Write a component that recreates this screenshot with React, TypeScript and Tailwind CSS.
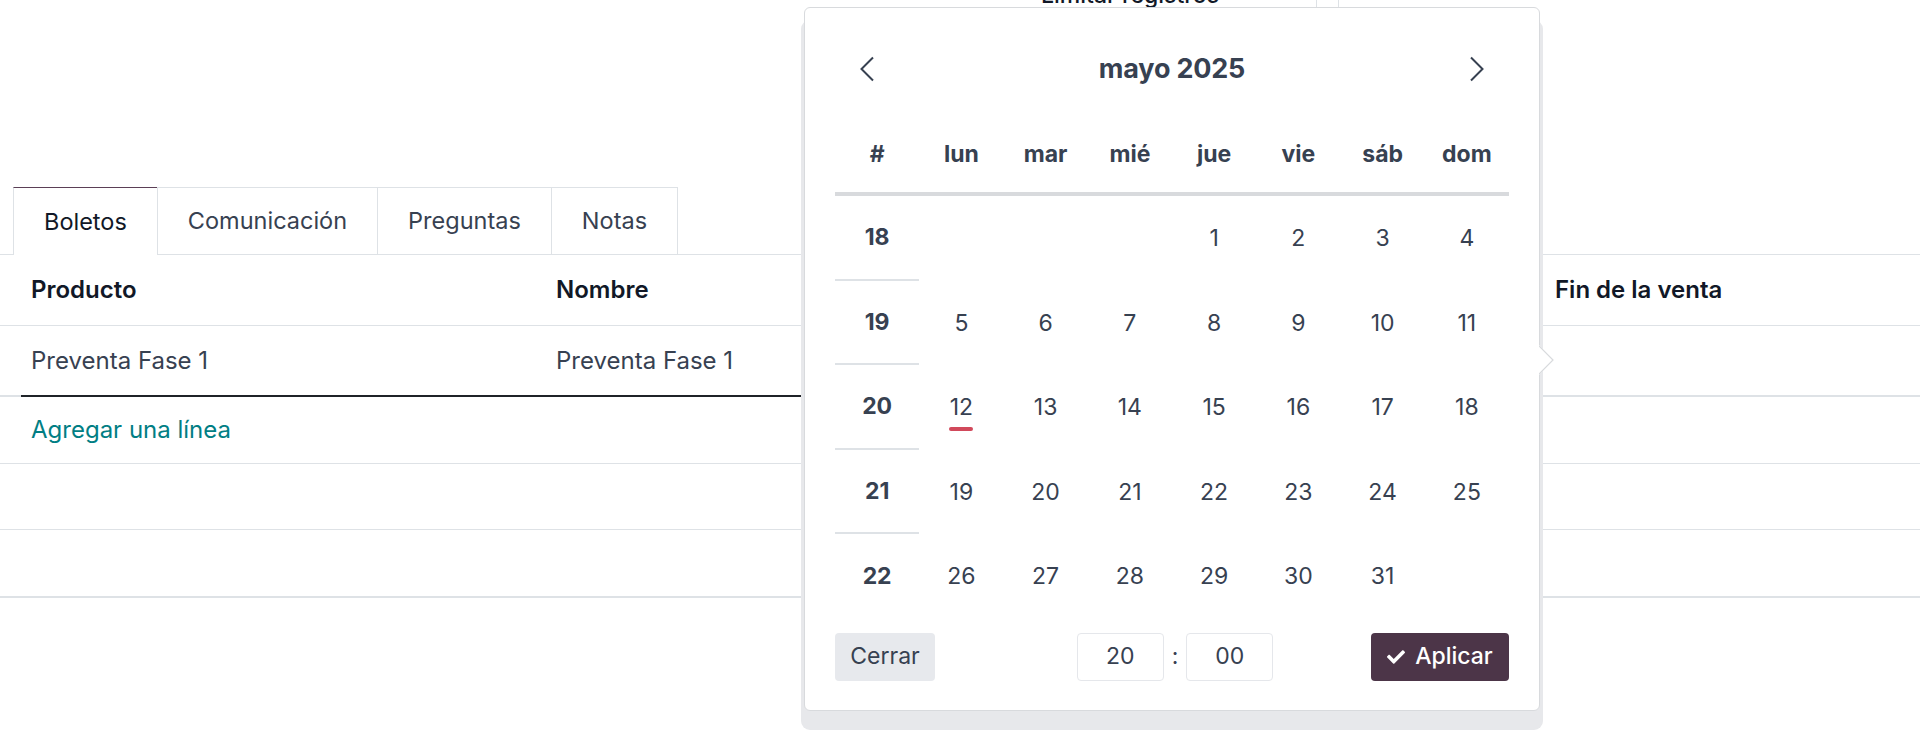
import { FaCheck } from "react-icons/fa";

const weeks: { num: number; days: (number | null)[] }[] = [
  { num: 18, days: [null, null, null, 1, 2, 3, 4] },
  { num: 19, days: [5, 6, 7, 8, 9, 10, 11] },
  { num: 20, days: [12, 13, 14, 15, 16, 17, 18] },
  { num: 21, days: [19, 20, 21, 22, 23, 24, 25] },
  { num: 22, days: [26, 27, 28, 29, 30, 31, null] },
];

const weekdays = ["#", "lun", "mar", "mié", "jue", "vie", "sáb", "dom"];

const tabs = ["Boletos", "Comunicación", "Preguntas", "Notas"];

const DatePicker = () => {
  return (
    <div className="absolute left-[804px] top-[7px] w-[736px] h-[704px] bg-white border border-[#d8dadd] rounded-[6px] shadow-[0_16px_0_3px_#e7e8eb] pt-[28px] px-[30px] text-[#374151]">
      {/* little arrow pointing at the field */}
      <svg
        className="absolute left-[734px] top-[337px]"
        width="15"
        height="30"
        viewBox="0 0 15 30"
      >
        <path d="M0 0 L14 15 L0 30 Z" fill="#ffffff" />
        <path d="M0 1 L14 15 L0 29" fill="none" stroke="#d8dadd" strokeWidth="1.2" />
      </svg>

      <div className="flex items-center justify-between h-[66px] px-[24px]">
        <svg width="16" height="26" viewBox="0 0 16 26">
          <path d="M14 1.5 L2.5 13 L14 24.5" fill="none" stroke="#374151" strokeWidth="2" />
        </svg>
        <span className="text-[27px] font-bold tracking-[-0.2px]">mayo 2025</span>
        <svg width="16" height="26" viewBox="0 0 16 26">
          <path d="M2 1.5 L13.5 13 L2 24.5" fill="none" stroke="#374151" strokeWidth="2" />
        </svg>
      </div>

      <div className="grid grid-cols-8 h-[94px] items-center pt-[14px] border-b-[4px] border-[#d8dadd]">
        {weekdays.map((d) => (
          <span key={d} className="text-center text-[23px] font-bold">
            {d}
          </span>
        ))}
      </div>

      <div className="flex flex-col">
        {weeks.map((w, i) => (
          <div key={w.num} className="grid grid-cols-8 h-[84.5px]">
            <div
              className={`flex items-center justify-center text-[23px] font-bold ${
                i < weeks.length - 1 ? "border-b-2 border-[#dee2e6]" : ""
              }`}
            >
              {w.num}
            </div>
            {w.days.map((d, j) => (
              <div key={j} className="relative flex items-center justify-center text-[23px]">
                {d}
                {d === 12 && (
                  <span className="absolute left-1/2 -translate-x-1/2 top-[62px] w-[24px] h-[4px] rounded-full bg-[#d1495b]" />
                )}
              </div>
            ))}
          </div>
        ))}
      </div>

      <div className="flex items-center justify-between mt-[14px]">
        <button className="h-[48px] w-[100px] rounded-[4px] bg-[#e7e9ed] text-[23px] text-[#374151]">
          Cerrar
        </button>
        <div className="flex items-center gap-[8px] ml-[44px]">
          <div className="h-[48px] w-[87px] rounded-[4px] border border-[#e5e7eb] flex items-center justify-center text-[23px]">
            20
          </div>
          <span className="text-[23px]">:</span>
          <div className="h-[48px] w-[87px] rounded-[4px] border border-[#e5e7eb] flex items-center justify-center text-[23px]">
            00
          </div>
        </div>
        <button className="h-[48px] w-[138px] rounded-[4px] bg-[#4c3548] text-white text-[23px] font-medium flex items-center justify-center gap-[10px]">
          <FaCheck size={18} />
          Aplicar
        </button>
      </div>
    </div>
  );
};

export default function App() {
  return (
    <div className="relative w-[1920px] h-[751px] overflow-hidden bg-white font-['Inter','Liberation_Sans',sans-serif]">
      {/* clipped bit of the section above */}
      <div className="relative h-[7px] overflow-hidden">
        <span className="absolute left-[1041px] top-[-20px] text-[23px] font-medium leading-[30px] text-[#111827]">
          Limitar registros
        </span>
        <div className="absolute left-[1316px] top-0 h-[7px] w-px bg-[#dee2e6]" />
        <div className="absolute left-[1338px] top-0 h-[7px] w-px bg-[#dee2e6]" />
      </div>

      <div className="h-[180px]" />

      {/* tabs */}
      <div className="flex h-[68px] border-b border-[#dee2e6] pl-[13px]">
        {tabs.map((t, i) => (
          <div
            key={t}
            className={`flex items-center px-[30px] text-[23.5px] border-x border-t -mb-px ${
              i === 0
                ? "bg-white border-t-[#5b3f56] border-x-[#dee2e6] text-[#111827]"
                : "border-[#dee2e6] text-[#374151] border-b border-b-[#dee2e6]"
            } ${i > 0 ? "-ml-px" : ""}`}
          >
            {t}
          </div>
        ))}
      </div>

      {/* one2many list */}
      <div className="flex flex-col">
        <div className="flex h-[71px] items-center border-b border-[#dee2e6] text-[24px] font-semibold text-[#111827]">
          <div className="w-[525px] pl-[31px]">Producto</div>
          <div className="w-[999px] pl-[31px]">Nombre</div>
          <div className="flex-1 pl-[31px]">Fin de la venta</div>
        </div>
        <div className="flex flex-col h-[71px]">
          <div className="flex flex-1 items-center text-[24px] text-[#374151]">
            <div className="w-[525px] pl-[31px]">Preventa Fase 1</div>
            <div className="w-[999px] pl-[31px]">Preventa Fase 1</div>
            <div className="flex-1" />
          </div>
          <div className="flex h-[2px]">
            <div className="w-[21px] bg-[#dee2e6]" />
            <div className="w-[1000px] bg-[#1f2328]" />
            <div className="flex-1 bg-[#dee2e6]" />
          </div>
        </div>
        <div className="flex h-[67px] items-center border-b border-[#dee2e6] text-[24px] text-[#017e84] pl-[31px]">
          Agregar una línea
        </div>
        <div className="h-[66px] border-b border-[#dee2e6]" />
        <div className="h-[68px] border-b-2 border-[#dee2e6]" />
      </div>

      <DatePicker />
    </div>
  );
}
